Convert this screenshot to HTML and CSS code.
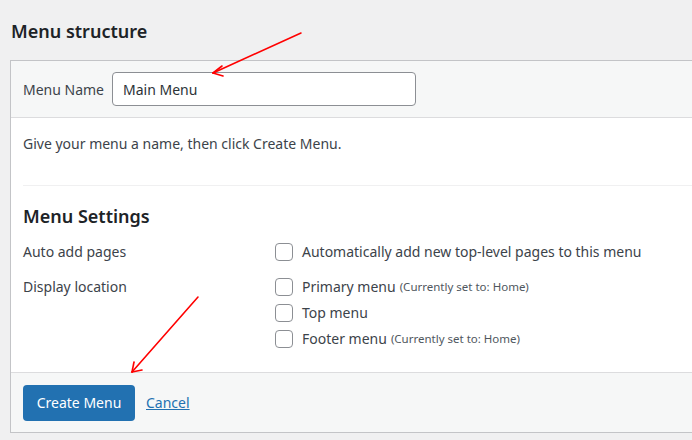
FILE: index.html
```html
<!DOCTYPE html>
<html lang="en">
<head>
<meta charset="UTF-8" />
<meta name="viewport" content="width=device-width, initial-scale=1.0" />
<title>Menu structure</title>
<link rel="stylesheet" href="styles.css">
</head>
<body>

<h2 class="title">Menu structure</h2>

<div class="panel">
  <div class="panel-head">
    <label for="menuName">Menu Name</label>
    <input id="menuName" class="name-input" type="text" value="Main Menu" />
  </div>

  <div class="panel-body">
    <p class="hint">Give your menu a name, then click Create Menu.</p>
    <div class="divider"></div>

    <h3 class="settings-title">Menu Settings</h3>
    <div class="settings">
      <div class="set-label">Auto add pages</div>
      <div class="set-options">
        <label class="opt"><span class="box"></span>Automatically add new top-level pages to this menu</label>
      </div>

      <div class="set-label">Display location</div>
      <div class="set-options locations">
        <label class="opt"><span class="box"></span>Primary menu <small>(Currently set to: Home)</small></label>
        <label class="opt"><span class="box"></span>Top menu</label>
        <label class="opt"><span class="box"></span>Footer menu <small>(Currently set to: Home)</small></label>
      </div>
    </div>
  </div>

  <div class="panel-foot">
    <button class="btn-primary">Create Menu</button>
    <a href="#" class="cancel">Cancel</a>
  </div>
</div>

<!-- red annotation arrows -->
<svg class="arrows" width="692" height="440" viewBox="0 0 692 440">
  <g stroke="#ff0000" stroke-width="1.6" fill="none" stroke-linecap="round">
    <line x1="301" y1="33" x2="213" y2="73" />
    <line x1="213" y1="73" x2="222" y2="66" />
    <line x1="213" y1="73" x2="223" y2="76" />
    <line x1="198" y1="297" x2="132" y2="372" />
    <line x1="132" y1="372" x2="134" y2="362" />
    <line x1="132" y1="372" x2="142" y2="370" />
  </g>
</svg>

</body>
</html>
```

FILE: styles.css
```css
html, body {
  margin: 0;
  overflow: hidden;
}
body {
  background: #f0f0f1;
  font-family: "Noto Sans", "Open Sans", sans-serif;
  font-size: 14px;
  color: #3c434a;
  padding-left: 10px;
  position: relative;
  height: 440px;
}
.title {
  margin: 0;
  padding: 19px 0 0 1px;
  height: 60px;
  box-sizing: border-box;
  font-size: 18px;
  font-weight: 600;
  color: #1d2327;
  line-height: 24px;
}
.panel {
  border: 1px solid #c3c4c7;
  border-right: none;
  background: #fff;
}
.panel-head {
  background: #f6f7f7;
  height: 56px;
  border-bottom: 1px solid #dcdcde;
  display: flex;
  align-items: center;
  padding: 0 12px;
  gap: 8px;
}
.panel-head label {
  flex: 0 0 79px;
  white-space: nowrap;
}
.name-input {
  width: 304px;
  height: 34px;
  box-sizing: border-box;
  border: 1px solid #8c8f94;
  border-radius: 4px;
  padding: 0 10px;
  font-family: inherit;
  font-size: 14px;
  color: #2c3338;
  background: #fff;
}
.panel-body {
  padding: 0 0 0 12px;
  height: 254px;
  box-sizing: border-box;
}
.hint {
  margin: 0;
  padding-top: 16px;
  line-height: 20px;
  height: 56px;
  box-sizing: border-box;
}
.divider {
  border-top: 1px solid #f0f0f1;
  margin-top: 11px;
}
.settings-title {
  margin: 0;
  padding-top: 19px;
  font-size: 18px;
  font-weight: 600;
  color: #1d2327;
  line-height: 22px;
}
.settings {
  display: grid;
  grid-template-columns: 252px 1fr;
  margin-top: 14px;
  row-gap: 13px;
}
.set-label {
  line-height: 22px;
}
.set-options {
  display: flex;
  flex-direction: column;
  gap: 4px;
}
.opt {
  display: flex;
  align-items: center;
  line-height: 22px;
  color: #3c434a;
}
.opt small {
  font-size: 11.5px;
  margin-left: 4px;
  color: #50575e;
}
.box {
  width: 16px;
  height: 16px;
  border: 1px solid #8c8f94;
  border-radius: 4px;
  background: #fff;
  margin-right: 9px;
  flex: none;
}
.panel-foot {
  background: #f6f7f7;
  border-top: 1px solid #dcdcde;
  height: 59px;
  display: flex;
  align-items: center;
  padding: 0 12px;
  gap: 11px;
}
.btn-primary {
  background: #2271b1;
  color: #fff;
  border: none;
  border-radius: 4px;
  height: 36px;
  width: 112px;
  font-family: inherit;
  font-size: 14px;
  cursor: pointer;
}
.cancel {
  color: #2271b1;
}
.arrows {
  position: absolute;
  left: 0;
  top: 0;
  pointer-events: none;
}
```
